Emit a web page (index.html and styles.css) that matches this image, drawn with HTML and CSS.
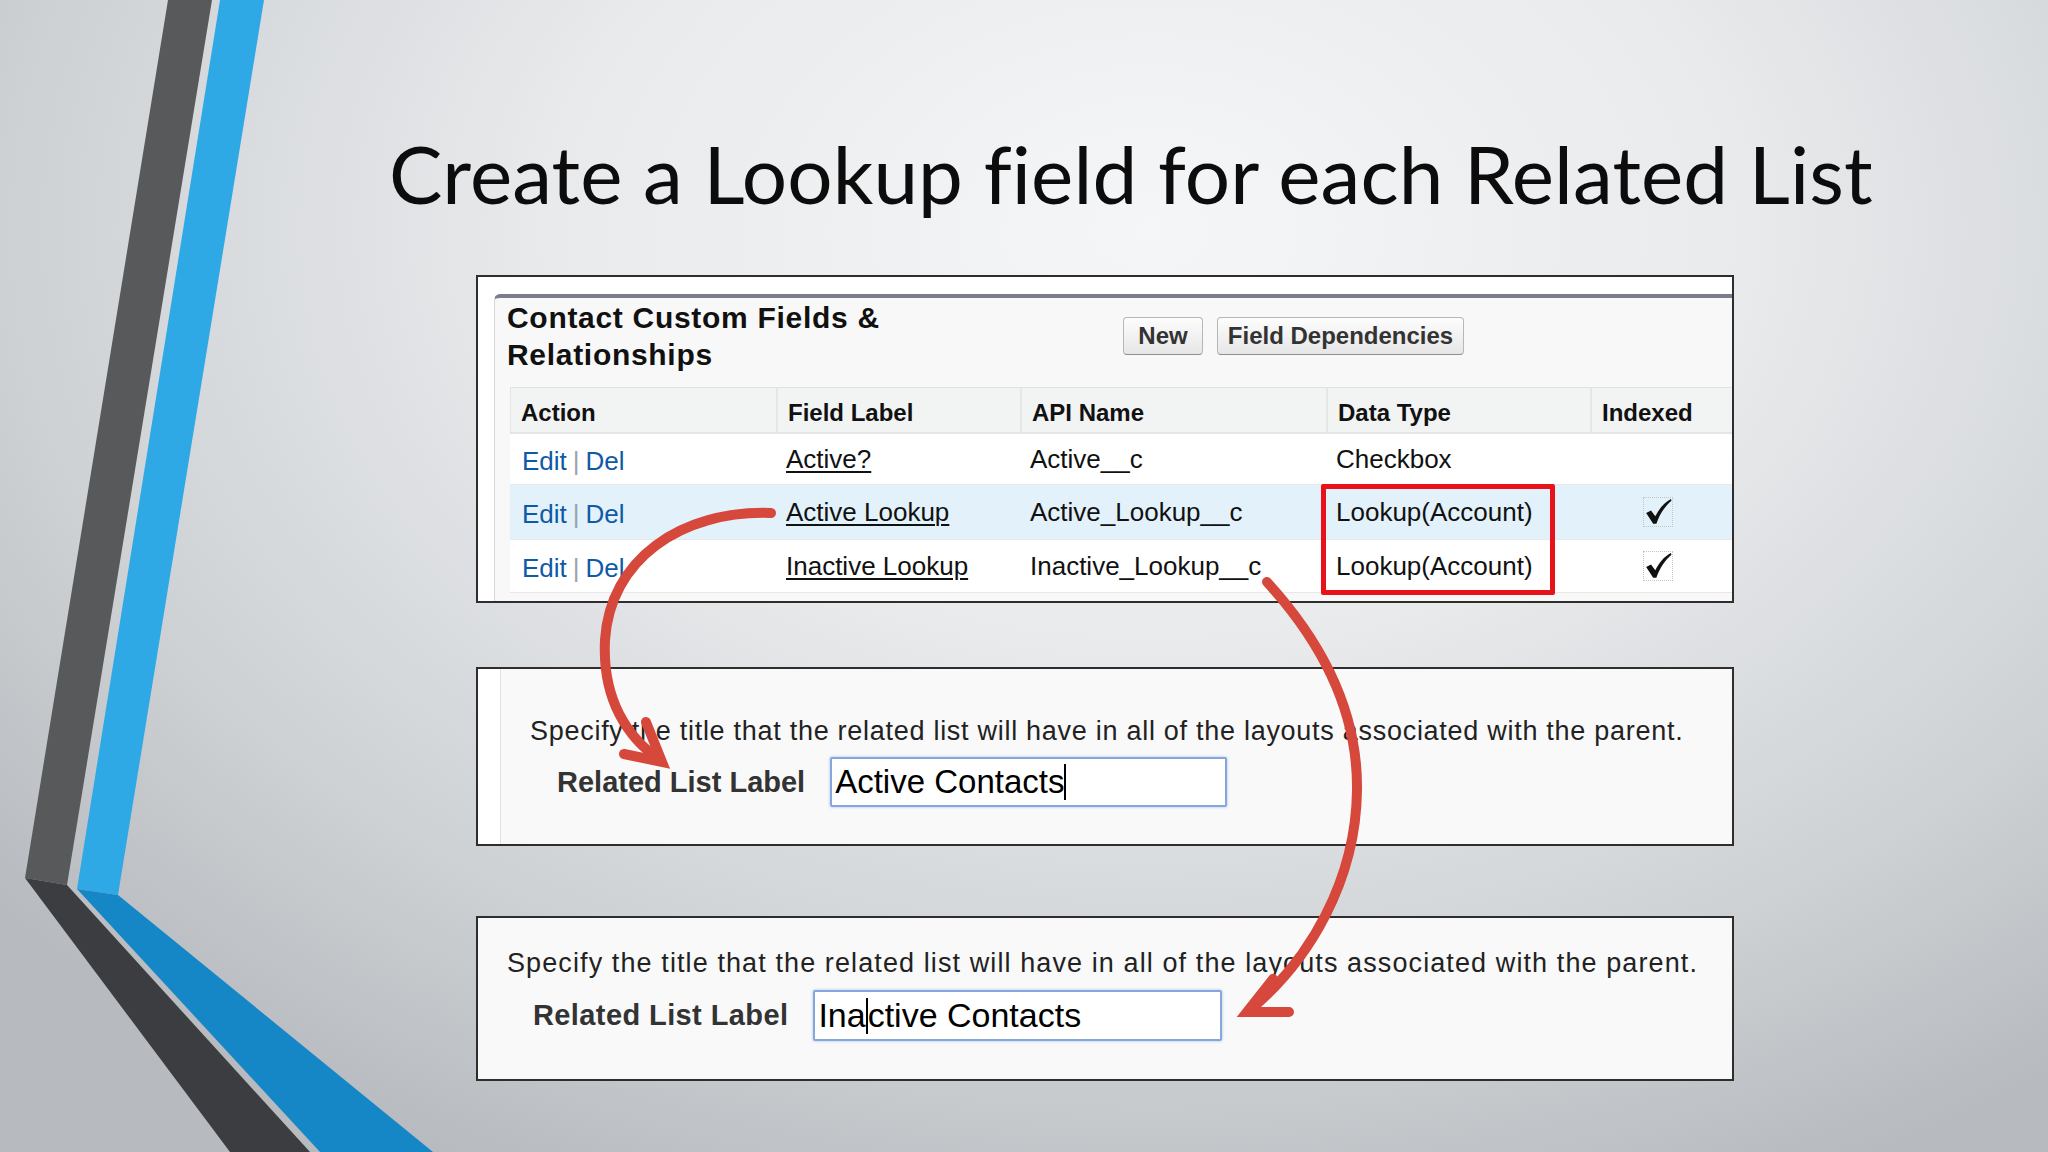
FILE: index.html
```html
<!DOCTYPE html>
<html lang="en">
<head>
<meta charset="utf-8">
<title>Create a Lookup field for each Related List</title>
<link rel="stylesheet" href="styles.css">
</head>
<body>
<svg class="decor" width="2048" height="1152" viewBox="0 0 2048 1152" aria-hidden="true">
  <polygon class="st-dark" points="168,0 212,0 67,885 25,878"/>
  <polygon class="st-dark-low" points="25,878 67,885 310,1152 230,1152"/>
  <polygon class="st-blue" points="220,0 264,0 118,895 77,889"/>
  <polygon class="st-blue-low" points="77,889 118,895 433,1152 320,1152"/>
</svg>

<main class="slide">
  <h1 class="title">Create a Lookup field for each Related List</h1>

  <section class="panel panel-fields">
    <div class="fields-inner">
      <div class="fields-head">
        <h2 class="fields-title">Contact Custom Fields &amp;<br>Relationships</h2>
        <div class="btns">
          <span class="btn btn-new">New</span>
          <span class="btn btn-deps">Field Dependencies</span>
        </div>
      </div>
      <div class="grid">
        <div class="th th-first">Action</div>
        <div class="th">Field Label</div>
        <div class="th">API Name</div>
        <div class="th">Data Type</div>
        <div class="th">Indexed</div>

        <div class="td r1 c-act"><span class="lnk">Edit</span><span class="sep">|</span><span class="lnk">Del</span></div>
        <div class="td r1 c-lbl"><span class="ul">Active?</span></div>
        <div class="td r1 c-api">Active__c</div>
        <div class="td r1 c-type">Checkbox</div>
        <div class="td r1 c-idx"></div>

        <div class="td r2 c-act"><span class="lnk">Edit</span><span class="sep">|</span><span class="lnk">Del</span></div>
        <div class="td r2 c-lbl"><span class="ul">Active Lookup</span></div>
        <div class="td r2 c-api">Active_Lookup__c</div>
        <div class="td r2 c-type">Lookup(Account)</div>
        <div class="td r2 c-idx"><span class="chk"><svg width="28" height="28" viewBox="0 0 26 26"><path d="M2 14 L6.5 11.5 L10.5 17 C14 10 18.5 4.5 25 1 L25.5 2.5 C19.5 7.5 14.5 15 11.5 24 L8.5 24 Z"/></svg></span></div>

        <div class="td r3 c-act"><span class="lnk">Edit</span><span class="sep">|</span><span class="lnk">Del</span></div>
        <div class="td r3 c-lbl"><span class="ul">Inactive Lookup</span></div>
        <div class="td r3 c-api">Inactive_Lookup__c</div>
        <div class="td r3 c-type">Lookup(Account)</div>
        <div class="td r3 c-idx"><span class="chk"><svg width="28" height="28" viewBox="0 0 26 26"><path d="M2 14 L6.5 11.5 L10.5 17 C14 10 18.5 4.5 25 1 L25.5 2.5 C19.5 7.5 14.5 15 11.5 24 L8.5 24 Z"/></svg></span></div>

        <div class="redbox"></div>
      </div>
    </div>
  </section>

  <section class="panel panel-active">
    <div class="label-inner">
      <p class="spec">Specify the title that the related list will have in all of the layouts associated with the parent.</p>
      <div class="label-row">
        <span class="rl-label">Related List Label</span>
        <span class="inp inp-active">Active Contacts<span class="caret"></span></span>
      </div>
    </div>
  </section>

  <section class="panel panel-inactive">
    <p class="spec spec-b">Specify the title that the related list will have in all of the layouts associated with the parent.</p>
    <div class="label-row label-row-b">
      <span class="rl-label rl-label-b">Related List Label</span>
      <span class="inp inp-inactive">Ina<span class="caret"></span>ctive Contacts</span>
    </div>
  </section>
</main>

<svg class="arrows" width="2048" height="1152" viewBox="0 0 2048 1152" aria-hidden="true">
  <path class="arw" d="M771,513 C680,510 610,560 605,640 C602,700 628,738 660,760"/>
  <path class="arw" d="M624,754 L662,762 L646,722"/>
  <path class="arw" d="M1267,582 C1320,640 1358,710 1357,790 C1356,880 1310,960 1250,1010"/>
  <path class="arw" d="M1289,1012 L1247,1012 L1273,979"/>
</svg>
</body>
</html>
```

FILE: styles.css
```css
html, body {
  margin: 0;
  padding: 0;
}

body {
  width: 2048px;
  height: 1152px;
  overflow: hidden;
  position: relative;
  font-family: "Liberation Sans", Arial, sans-serif;
  color: #111;
  background:
    radial-gradient(ellipse 1500px 1050px at 1150px 230px, #f5f6f7 0%, #e8eaec 40%, #cfd2d5 75%, #b7babe 100%);
}

.decor {
  position: absolute;
  left: 0;
  top: 0;
  z-index: 0;
}

.st-dark { fill: #58595b; }
.st-dark-low { fill: #3c3d40; }
.st-blue { fill: #2fa9e6; }
.st-blue-low { fill: #1687c6; }

.arrows {
  position: absolute;
  left: 0;
  top: 0;
  z-index: 3;
  pointer-events: none;
}

.arw {
  fill: none;
  stroke: #d5483b;
  stroke-width: 10;
  stroke-linecap: round;
  stroke-linejoin: miter;
}

.slide {
  position: relative;
  z-index: 1;
  padding-top: 133px;
}

.title {
  margin: 0 0 0 389px;
  font-family: Lato, "Open Sans", sans-serif;
  font-weight: 400;
  font-size: 80px;
  line-height: 80px;
  height: 80px;
  white-space: nowrap;
  color: #0c0c0c;
  letter-spacing: 0.1px;
}

.panel {
  margin-left: 476px;
  width: 1258px;
  box-sizing: border-box;
  border: 2px solid #2e2e2e;
  background: #fff;
}

/* ---------- Panel 1 ---------- */
.panel-fields {
  margin-top: 62px;
  height: 328px;
  padding: 17px 0 0 16px;
}

.fields-inner {
  height: 100%;
  box-sizing: border-box;
  border-top: 4px solid #7b7d8d;
  border-left: 1px solid #d6d7da;
  border-top-left-radius: 6px;
  background: #f8f8f8;
  padding: 1px 0 0 12px;
}

.fields-head {
  display: flex;
  height: 88px;
}

.fields-title {
  flex: 0 0 616px;
  margin: 0;
  font-size: 30px;
  line-height: 37px;
  font-weight: 700;
  letter-spacing: 0.7px;
  color: #111;
}

.btns {
  display: flex;
  gap: 14px;
  margin-top: 18px;
  height: 38px;
}

.btn {
  display: flex;
  align-items: center;
  justify-content: center;
  box-sizing: border-box;
  height: 38px;
  border: 1px solid #b7b7b7;
  border-bottom-color: #8e8e8e;
  border-radius: 4px;
  background: linear-gradient(#fdfdfd, #e6e6e6);
  font-size: 24px;
  font-weight: 700;
  color: #333;
}

.btn-new { width: 80px; }
.btn-deps { width: 247px; }

.grid {
  position: relative;
  margin-left: 3px;
  width: 1222px;
  display: grid;
  grid-template-columns: 266px 244px 306px 264px 142px;
  grid-template-rows: 47px 51px 55px 53px;
  background: #fff;
}

.th {
  display: flex;
  align-items: center;
  box-sizing: border-box;
  padding: 6px 0 0 10px;
  background: #f2f3f3;
  border-top: 1px solid #e0e2e4;
  border-bottom: 2px solid #e3e5e7;
  border-left: 2px solid #e4e6e8;
  font-size: 24px;
  font-weight: 700;
  color: #111;
}

.th-first { border-left: 1px solid #e4e6e8; }

.td {
  display: flex;
  align-items: center;
  box-sizing: border-box;
  padding-left: 10px;
  border-bottom: 1px solid #e8e8e8;
  font-size: 26px;
  color: #111;
  white-space: nowrap;
}

.r2 { background: #e3f1fb; }

.c-act { padding-left: 12px; padding-top: 4px; }
.c-type { padding-left: 10px; }
.c-idx { padding-left: 54px; }

.lnk { color: #0f5aa6; }
.sep { color: #9aa3ad; margin: 0 6px; }
.ul { text-decoration: underline; text-underline-offset: 3px; text-decoration-thickness: 2px; }

.chk {
  display: inline-flex;
  align-items: center;
  justify-content: center;
  width: 28px;
  height: 28px;
  outline: 1px dotted #c4c4c4;
}

.chk path { fill: #111; }

.redbox {
  position: absolute;
  left: 811px;
  top: 97px;
  width: 234px;
  height: 111px;
  box-sizing: border-box;
  border: 5px solid #e8121a;
  border-radius: 2px;
  z-index: 2;
}

/* ---------- Panels 2 and 3 ---------- */
.panel-active {
  margin-top: 64px;
  height: 179px;
  padding-left: 22px;
}

.label-inner {
  height: 100%;
  box-sizing: border-box;
  border-left: 1px solid #e2e3e5;
  background: #f9f9fa;
  padding: 47px 0 0 29px;
}

.panel-inactive {
  margin-top: 70px;
  height: 165px;
  background: #f9f9fa;
  padding: 30px 0 0 29px;
}

.spec {
  margin: 0;
  font-size: 27px;
  line-height: 30px;
  letter-spacing: 0.72px;
  color: #222;
  white-space: nowrap;
}

.spec-b {
  letter-spacing: 1.1px;
}

.label-row {
  display: flex;
  align-items: center;
  margin-top: 11px;
  padding-left: 27px;
}

.label-row-b {
  margin-top: 12px;
  padding-left: 26px;
}

.rl-label {
  font-size: 29px;
  font-weight: 700;
  color: #333;
}

.rl-label-b {
  letter-spacing: 0.4px;
}

.inp {
  display: flex;
  align-items: center;
  box-sizing: border-box;
  margin-left: 25px;
  width: 397px;
  height: 50px;
  padding-left: 3px;
  border: 2px solid #85a7dc;
  border-radius: 2px;
  box-shadow: 0 0 3px rgba(90, 140, 215, 0.55);
  background: #fff;
  font-size: 33px;
  color: #000;
  white-space: pre;
}

.inp-inactive {
  margin-left: 25px;
  width: 409px;
  height: 51px;
  font-size: 34px;
  letter-spacing: 0;
}

.caret {
  display: inline-block;
  width: 0;
  height: 36px;
  border-left: 2px solid #000;
}
```
